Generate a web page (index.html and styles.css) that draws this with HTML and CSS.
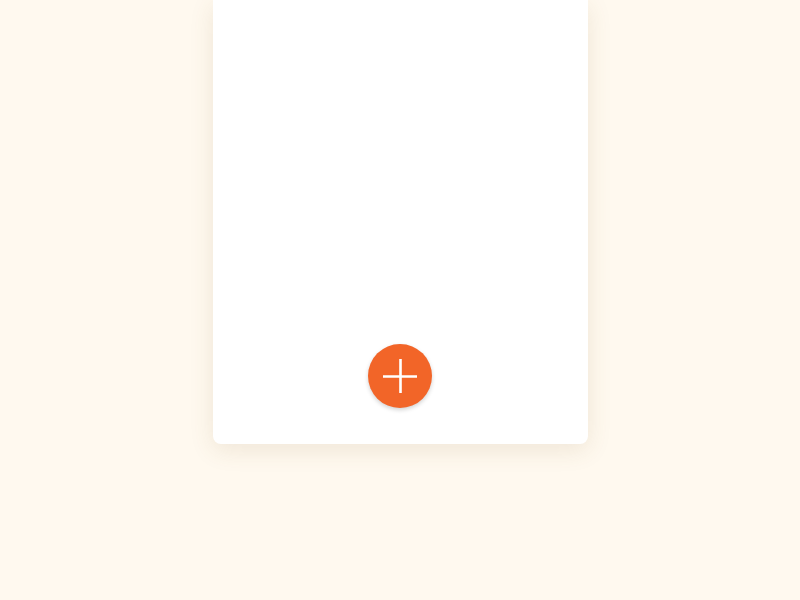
FILE: index.html
```html
<!DOCTYPE html>
<html>
<head>
<meta charset="utf-8">
<link rel="stylesheet" href="styles.css">
</head>
<body>
<div class="card">
  <button class="fab" aria-label="Add">
    <svg width="34" height="34" viewBox="0 0 34 34"><path d="M17.5 0V34M0 17.5H34" stroke="#fff" stroke-width="2.6"/></svg>
  </button>
</div>
</body>
</html>
```
FILE: styles.css
```css
html, body { margin: 0; padding: 0; }
body {
  background: #fff9ef;
  width: 800px;
  height: 600px;
  overflow: hidden;
  font-family: "Liberation Sans", sans-serif;
}
.card {
  width: 375px;
  height: 444px;
  margin: 0 auto;
  background: #fff;
  border-radius: 0 0 8px 8px;
  box-shadow: 0 6px 24px rgba(120, 90, 40, 0.12);
  display: flex;
  flex-direction: column;
  justify-content: flex-end;
  align-items: center;
  padding-bottom: 36px;
  box-sizing: border-box;
}
.fab {
  width: 64px;
  height: 64px;
  border-radius: 50%;
  border: none;
  padding: 0;
  background: #f26528;
  box-shadow: 0 2px 4px rgba(0,0,0,0.18);
  display: flex;
  align-items: center;
  justify-content: center;
}
.fab svg { display: block; }
```
